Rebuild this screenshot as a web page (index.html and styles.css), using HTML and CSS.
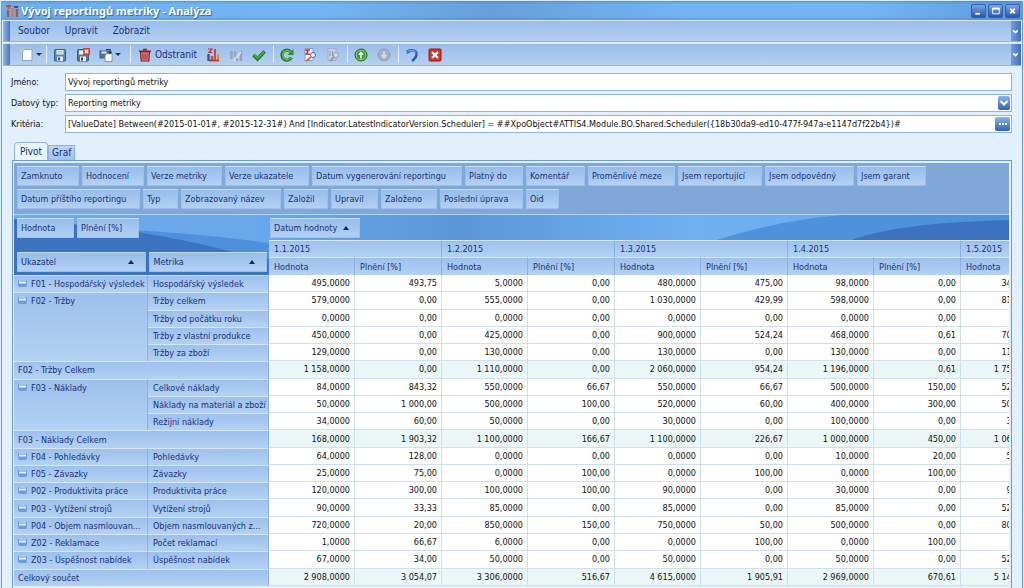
FILE: index.html
```
<!DOCTYPE html>
<html lang="cs">
<head>
<meta charset="utf-8">
<title>Vývoj reportingů metriky - Analýza</title>
<link rel="stylesheet" href="styles.css">
</head>
<body>
<div class="window">
  <header class="titlebar">
    <svg class="app-icon" viewBox="0 0 14 14" aria-hidden="true"><path d="M1 2h5M3.500 2v3" stroke="#d8432c" stroke-width="2"/><path d="M3 6v7M12 5v8" stroke="#b5543c" stroke-width="2.400"/><path d="M7.500 4v9" stroke="#e8772e" stroke-width="2.400"/><path d="M9 3h4" stroke="#6a3a78" stroke-width="2"/></svg>
    <h1 class="title">Vývoj reportingů metriky - Analýza</h1>
    <div class="window-buttons">
      <button class="wbtn" aria-label="Minimalizovat"><svg viewBox="0 0 13 13"><path d="M3 9.500h5" stroke="#fff" stroke-width="2"/></svg></button>
      <button class="wbtn" aria-label="Maximalizovat"><svg viewBox="0 0 13 13"><path d="M3.500 3.500h7v6h-7z" fill="none" stroke="#fff"/><path d="M3 4h8" stroke="#fff" stroke-width="2"/></svg></button>
      <button class="wbtn" aria-label="Zavřít"><svg viewBox="0 0 13 13"><path d="M4 4l5 5M9 4l-5 5" stroke="#fff" stroke-width="2"/></svg></button>
    </div>
  </header>

  <nav class="bar menubar">
    <span class="grip"></span>
    <button class="menu-item">Soubor</button>
    <button class="menu-item">Upravit</button>
    <button class="menu-item">Zobrazit</button>
    <button class="overflow" aria-label="Další"><svg viewBox="0 0 8 8"><path d="M2 3l2 2 2-2" fill="none" stroke="#fff" stroke-width="1.300"/></svg></button>
  </nav>

  <div class="bar toolbar">
    <span class="grip"></span>
    <button class="tool drop" aria-label="Nový"><svg viewBox="0 0 14 14"><path d="M4 1.500h8v11H2.500V4z" fill="#fdfefe" stroke="#8ba7cc"/><path d="M1 4l3-3v3z" fill="#f2c84a"/></svg><i class="caret"></i></button>
    <span class="sep"></span>
    <button class="tool" aria-label="Uložit"><svg viewBox="0 0 14 14"><rect x="1.500" y="1.500" width="11" height="11.500" rx="1" fill="#5d83b4" stroke="#365a8c"/><rect x="3.500" y="2" width="7" height="4.500" fill="#f4f8fc"/><path d="M4.500 3.500h5M4.500 5h5" stroke="#7fa57c" stroke-width=".7"/><rect x="4" y="8.500" width="6" height="4.500" fill="#e5edf6"/><rect x="5" y="9.500" width="2" height="3" fill="#34537f"/></svg></button>
    <button class="tool" aria-label="Uložit a zavřít"><svg viewBox="0 0 14 14"><rect x="1.500" y="1.500" width="11" height="11.500" rx="1" fill="#5d7396" stroke="#365a8c"/><rect x="3" y="2.500" width="6" height="4" fill="#f4f8fc"/><rect x="4" y="8.500" width="6" height="4.500" fill="#e5edf6"/><rect x="5" y="9.500" width="2" height="3" fill="#344"/><rect x="7" y="0" width="7" height="7" fill="#d8412f"/><path d="M8.800 1.800l3.400 3.400M12.200 1.800L8.800 5.200" stroke="#fff" stroke-width="1.400"/></svg></button>
    <button class="tool drop" aria-label="Uložit a nový"><svg viewBox="0 0 14 14"><rect x="1" y="3" width="8" height="7" fill="#58739b" stroke="#2e4569" stroke-width=".8"/><rect x="2.500" y="3.500" width="5" height="2" fill="#eef"/><path d="M7.500 5.500h5.500v8H6V8z" fill="#f9fbfd" stroke="#6b83a8" stroke-width=".8"/><path d="M7 1.500h4v3M9.500 3.500L11 5.500l1.500-2" fill="none" stroke="#1f2f4f" stroke-width="1.200"/></svg><i class="caret"></i></button>
    <span class="sep"></span>
    <button class="tool labelled"><svg viewBox="0 0 14 14"><path d="M2.500 4h9l-.7 9H3.200z" fill="#e08a86" stroke="#8e1f24" stroke-width="1.200"/><path d="M1 3.200h12M5 1.500h4" stroke="#8e1f24" stroke-width="1.600"/><path d="M5 5.500v6M7 5.500v6M9 5.500v6" stroke="#8e1f24" stroke-width=".9"/></svg>Odstranit</button>
    <button class="tool" aria-label="Analýza"><svg viewBox="0 0 14 14"><path d="M2 1h4L3 4.500h3.500" fill="none" stroke="#cf2e2e" stroke-width="1.200"/><path d="M2.500 6v7" stroke="#31599c" stroke-width="2.400"/><path d="M6 8v5" stroke="#d2483a" stroke-width="2.400"/><path d="M9 1v12" stroke="#9f3b46" stroke-width="1.600"/><path d="M12 6v7" stroke="#e68a34" stroke-width="2.200"/><path d="M3 12.500h10" stroke="#c8342b" stroke-width="1.800"/></svg></button>
    <button class="tool" disabled aria-label="Graf"><svg viewBox="0 0 14 14"><path d="M2.500 3v8M6 3v6M12 3v10" stroke="#93a2b8" stroke-width="2.300"/><path d="M5 13l7-9" stroke="#dfe7f0" stroke-width="1.500"/><path d="M8 13v-3" stroke="#93a2b8" stroke-width="2"/></svg></button>
    <button class="tool" aria-label="Potvrdit"><svg viewBox="0 0 14 14"><path d="M1.500 7l4 4L12.500 3.500" fill="none" stroke="#1f6d1c" stroke-width="3.600"/><path d="M2 7l3.500 3.300L12 3.800" fill="none" stroke="#45ad34" stroke-width="2"/></svg></button>
    <span class="sep"></span>
    <button class="tool" aria-label="Obnovit"><svg viewBox="0 0 14 14"><path d="M11.300 9.500A5 5 0 1 1 10.500 3.600" fill="none" stroke="#217a1f" stroke-width="3.200"/><path d="M11 9.500A4.600 4.600 0 1 1 10.500 4" fill="none" stroke="#5fbd4b" stroke-width="1.400"/><path d="M13.500 1v6H7.500z" fill="#2f8f2a"/></svg></button>
    <button class="tool" aria-label="Součty"><svg viewBox="0 0 14 14"><path d="M2 .5h8v12H2z" fill="#f7f9fd" stroke="#6f8fc4" stroke-width=".8"/><path d="M7 2H3l2 2-2 2.200h4" fill="none" stroke="#cc2430" stroke-width="1.300"/><circle cx="10" cy="7" r="2.500" fill="#e6f1fb" stroke="#4a6ea8"/><path d="M8 9l-5 4.500" stroke="#d06d42" stroke-width="1.800"/></svg></button>
    <button class="tool" disabled aria-label="Filtr"><svg viewBox="0 0 14 14"><path d="M2 .5h8v12H2z" fill="#c3d0e0" stroke="#9caac0" stroke-width=".8"/><path d="M4 3v5M6.500 3v5" stroke="#92a0b6"/><circle cx="10" cy="7" r="2.500" fill="#d2deea" stroke="#8e9cb2"/><path d="M8 9l-4 4" stroke="#8e9cb2" stroke-width="1.800"/></svg></button>
    <span class="sep"></span>
    <button class="tool" aria-label="Předchozí"><svg viewBox="0 0 14 14"><circle cx="7" cy="7" r="6" fill="#3d9c2e" stroke="#23641d"/><circle cx="7" cy="7" r="4.800" fill="none" stroke="#b9e2a8" stroke-width=".7"/><path d="M7 10.500V5M4.800 6.800L7 4.600l2.200 2.200" fill="none" stroke="#fff" stroke-width="1.500"/></svg></button>
    <button class="tool" disabled aria-label="Další záznam"><svg viewBox="0 0 14 14"><circle cx="7" cy="7" r="6" fill="#a3b1c3" stroke="#8f9db1"/><path d="M7 3.500V9M4.500 7L7 9.700 9.500 7" fill="none" stroke="#dbe5f0" stroke-width="1.500"/></svg></button>
    <span class="sep"></span>
    <button class="tool" aria-label="Zpět"><svg viewBox="0 0 14 14"><path d="M2 3.500c4-2 9-1.500 9.500 2 .3 3-2 5.500-4.500 7.500" fill="none" stroke="#2c5cae" stroke-width="2.400"/><path d="M2 3.500c4-2 8.500-1.500 9 2" fill="none" stroke="#86b4ec" stroke-width="1"/><path d="M1 2l1 4.500 4-2.500z" fill="#4d82cc"/></svg></button>
    <button class="tool" aria-label="Zavřít"><svg viewBox="0 0 14 14"><rect x="1" y="1" width="12" height="12" rx="1" fill="#cf3528" stroke="#9a1a15"/><path d="M4 4l6 6M10 4l-6 6" stroke="#fff" stroke-width="2.200"/></svg></button>
    <button class="overflow" aria-label="Další"><svg viewBox="0 0 8 8"><path d="M2 3l2 2 2-2" fill="none" stroke="#fff" stroke-width="1.300"/></svg></button>
  </div>

  <main class="content">
    <form class="fields">
      <label for="name">Jméno:</label>
      <div class="field"><input id="name" type="text" value="Vývoj reportingů metriky"></div>
      <label for="type">Datový typ:</label>
      <div class="field"><select id="type"><option>Reporting metriky</option></select><span class="fbtn arrow"><svg viewBox="0 0 12 12"><path d="M2.500 4L6 7.500 9.500 4" fill="none" stroke="#fff" stroke-width="2"/></svg></span></div>
      <label for="crit">Kritéria:</label>
      <div class="field"><input id="crit" type="text" value="[ValueDate] Between(#2015-01-01#, #2015-12-31#) And [Indicator.LatestIndicatorVersion.Scheduler] = ##XpoObject#ATTIS4.Module.BO.Shared.Scheduler({18b30da9-ed10-477f-947a-e1147d7f22b4})#"><button type="button" class="fbtn more" aria-label="Upravit kritéria"><svg viewBox="0 0 12 12"><path d="M2 6h2M5 6h2M8 6h2" stroke="#fff" stroke-width="2"/></svg></button></div>
    </form>

    <div class="tabs" role="tablist">
      <button class="tab active" role="tab" aria-selected="true">Pivot</button>
      <button class="tab" role="tab" aria-selected="false">Graf</button>
    </div>

    <section class="pivot">
      <div class="filters">
        <div class="filter-row first">
          <button class="chip">Zamknuto</button><button class="chip">Hodnocení</button><button class="chip">Verze metriky</button><button class="chip">Verze ukazatele</button><button class="chip">Datum vygenerování reportingu</button><button class="chip">Platný do</button><button class="chip">Komentář</button><button class="chip">Proměnlivé meze</button><button class="chip">Jsem reportující</button><button class="chip">Jsem odpovědný</button><button class="chip">Jsem garant</button>
        </div>
        <div class="filter-row second">
          <button class="chip">Datum příštího reportingu</button><button class="chip">Typ</button><button class="chip">Zobrazovaný název</button><button class="chip">Založil</button><button class="chip">Upravil</button><button class="chip">Založeno</button><button class="chip">Poslední úprava</button><button class="chip">Oid</button>
        </div>
      </div>
      <div class="grid-wrap">
      <table class="grid">
        <colgroup><col class="c-ind"><col class="c-met"><col class="c-val"><col class="c-pct"><col class="c-val"><col class="c-pct"><col class="c-val"><col class="c-pct"><col class="c-val"><col class="c-pct"><col class="c-last"></colgroup>
        <thead>
          <tr class="area">
            <td class="corner" colspan="2" rowspan="3">
              <div class="chips data"><button class="chip">Hodnota</button><button class="chip">Plnění [%]</button></div>
              <div class="chips rows"><button class="chip sorted">Ukazatel<i class="up"></i></button><button class="chip sorted">Metrika<i class="up"></i></button></div>
            </td>
            <td class="column-area" colspan="9"><button class="chip date">Datum hodnoty<i class="up"></i></button></td>
          </tr>
          <tr class="dates"><th colspan="2">1.1.2015</th><th colspan="2">1.2.2015</th><th colspan="2">1.3.2015</th><th colspan="2">1.4.2015</th><th>1.5.2015</th></tr>
          <tr class="measures"><th>Hodnota</th><th>Plnění [%]</th><th>Hodnota</th><th>Plnění [%]</th><th>Hodnota</th><th>Plnění [%]</th><th>Hodnota</th><th>Plnění [%]</th><th>Hodnota</th></tr>
        </thead>
        <tbody>
          <tr><th class="group"><i class="node"></i>F01 - Hospodářský výsledek</th><th>Hospodářský výsledek</th><td>495,0000</td><td>493,75</td><td>5,0000</td><td>0,00</td><td>480,0000</td><td>475,00</td><td>98,0000</td><td>0,00</td><td>345,0000</td></tr>
          <tr><th class="group" rowspan="4"><i class="node"></i>F02 - Tržby</th><th>Tržby celkem</th><td>579,0000</td><td>0,00</td><td>555,0000</td><td>0,00</td><td>1 030,0000</td><td>429,99</td><td>598,0000</td><td>0,00</td><td>815,0000</td></tr>
          <tr><th>Tržby od počátku roku</th><td>0,0000</td><td>0,00</td><td>0,0000</td><td>0,00</td><td>0,0000</td><td>0,00</td><td>0,0000</td><td>0,00</td><td>0,0000</td></tr>
          <tr><th>Tržby z vlastní produkce</th><td>450,0000</td><td>0,00</td><td>425,0000</td><td>0,00</td><td>900,0000</td><td>524,24</td><td>468,0000</td><td>0,61</td><td>700,0000</td></tr>
          <tr><th>Tržby za zboží</th><td>129,0000</td><td>0,00</td><td>130,0000</td><td>0,00</td><td>130,0000</td><td>0,00</td><td>130,0000</td><td>0,00</td><td>115,0000</td></tr>
          <tr class="total"><th colspan="2">F02 - Tržby Celkem</th><td>1 158,0000</td><td>0,00</td><td>1 110,0000</td><td>0,00</td><td>2 060,0000</td><td>954,24</td><td>1 196,0000</td><td>0,61</td><td>1 755,0000</td></tr>
          <tr><th class="group" rowspan="3"><i class="node"></i>F03 - Náklady</th><th>Celkové náklady</th><td>84,0000</td><td>843,32</td><td>550,0000</td><td>66,67</td><td>550,0000</td><td>66,67</td><td>500,0000</td><td>150,00</td><td>525,0000</td></tr>
          <tr><th>Náklady na materiál a zboží</th><td>50,0000</td><td>1 000,00</td><td>500,0000</td><td>100,00</td><td>520,0000</td><td>60,00</td><td>400,0000</td><td>300,00</td><td>500,0000</td></tr>
          <tr><th>Režijní náklady</th><td>34,0000</td><td>60,00</td><td>50,0000</td><td>0,00</td><td>30,0000</td><td>0,00</td><td>100,0000</td><td>0,00</td><td>35,0000</td></tr>
          <tr class="total"><th colspan="2">F03 - Náklady Celkem</th><td>168,0000</td><td>1 903,32</td><td>1 100,0000</td><td>166,67</td><td>1 100,0000</td><td>226,67</td><td>1 000,0000</td><td>450,00</td><td>1 060,0000</td></tr>
          <tr><th class="group"><i class="node"></i>F04 - Pohledávky</th><th>Pohledávky</th><td>64,0000</td><td>128,00</td><td>0,0000</td><td>0,00</td><td>0,0000</td><td>0,00</td><td>10,0000</td><td>20,00</td><td>50,0000</td></tr>
          <tr><th class="group"><i class="node"></i>F05 - Závazky</th><th>Závazky</th><td>25,0000</td><td>75,00</td><td>0,0000</td><td>100,00</td><td>0,0000</td><td>100,00</td><td>0,0000</td><td>100,00</td><td>0,0000</td></tr>
          <tr><th class="group"><i class="node"></i>P02 - Produktivita práce</th><th>Produktivita práce</th><td>120,0000</td><td>300,00</td><td>100,0000</td><td>100,00</td><td>90,0000</td><td>0,00</td><td>30,0000</td><td>0,00</td><td>90,0000</td></tr>
          <tr><th class="group"><i class="node"></i>P03 - Vytížení strojů</th><th>Vytížení strojů</th><td>90,0000</td><td>33,33</td><td>85,0000</td><td>0,00</td><td>85,0000</td><td>0,00</td><td>85,0000</td><td>0,00</td><td>525,0000</td></tr>
          <tr><th class="group"><i class="node"></i>P04 - Objem nasmlouvan...</th><th>Objem nasmlouvaných z...</th><td>720,0000</td><td>20,00</td><td>850,0000</td><td>150,00</td><td>750,0000</td><td>50,00</td><td>500,0000</td><td>0,00</td><td>800,0000</td></tr>
          <tr><th class="group"><i class="node"></i>Z02 - Reklamace</th><th>Počet reklamací</th><td>1,0000</td><td>66,67</td><td>6,0000</td><td>0,00</td><td>0,0000</td><td>100,00</td><td>0,0000</td><td>100,00</td><td>0,0000</td></tr>
          <tr><th class="group"><i class="node"></i>Z03 - Úspěšnost nabídek</th><th>Úspěšnost nabídek</th><td>67,0000</td><td>34,00</td><td>50,0000</td><td>0,00</td><td>50,0000</td><td>0,00</td><td>50,0000</td><td>0,00</td><td>525,0000</td></tr>
          <tr class="total"><th colspan="2">Celkový součet</th><td>2 908,0000</td><td>3 054,07</td><td>3 306,0000</td><td>516,67</td><td>4 615,0000</td><td>1 905,91</td><td>2 969,0000</td><td>670,61</td><td>5 145,0000</td></tr>
        </tbody>
      </table>
      </div>
    </section>
  </main>
</div>
</body>
</html>
```
FILE: styles.css
```
* { box-sizing: border-box; }
body {
  margin: 0;
  font: 9px/12px "DejaVu Sans Condensed", "DejaVu Sans", sans-serif;
  color: #16307a;
  background: #e2effc;
}
button { font: inherit; color: inherit; border: 0; padding: 0; background: none; text-align: left; white-space: nowrap; }
svg { display: block; }

.window {
  display: flex;
  flex-direction: column;
  height: 100vh;
  overflow: hidden;
  border: 1px solid #d4ecfc;
  border-bottom: 0;
  background: #e2effc;
  box-shadow: inset 1px 0 #6b9bd6, inset -1px 0 #6b9bd6;
}

.titlebar {
  display: flex;
  align-items: center;
  height: 19px;
  padding: 0 2px 0 3px;
  margin: 0 1px;
  background:
    linear-gradient(rgba(60, 110, 160, .4), transparent 3px, transparent 15px, rgba(60, 110, 190, .3)),
    linear-gradient(90deg, #6aaeee, #74b6f4 30%, #679fda 48%, #72b4f4 67%, #74b6f4 84%, #5d9ade);
}
.app-icon { width: 14px; height: 14px; }
.title {
  flex: 1;
  margin: 0 0 0 2px;
  font: bold 11px/16px "Noto Sans", sans-serif;
  color: #fff;
  text-shadow: 1px 1px 1px #2f5f9f;
}
.window-buttons { display: flex; gap: 2px; }
.wbtn {
  width: 15px;
  height: 14px;
  border: 1px solid #2f5eac;
  border-radius: 2px;
  background: linear-gradient(#7ba7e4, #2a55a8);
}
.wbtn svg { width: 13px; height: 12px; }

.bar {
  display: flex;
  align-items: center;
  height: 22px;
  margin: 0 2px;
  border-top: 1px solid #d8eafc;
  border-bottom: 1px solid #8fb3e4;
  background: linear-gradient(#9bbdea, #b4d0f0);
  font-size: 10px;
}
.toolbar { margin-top: 1px; height: 23px; }
.grip {
  align-self: stretch;
  width: 7px;
  background: linear-gradient(90deg, #8fb6ec, #4677c2);
}
.overflow {
  align-self: stretch;
  display: flex;
  align-items: center;
  width: 10px;
  margin-left: auto;
  background: linear-gradient(90deg, #6f9ee0, #3f6fbe);
}
.overflow svg { width: 9px; height: 9px; }
.menu-item { margin-left: 8px; padding-right: 7px; }
.tool { flex: none; margin: 0 5px 0 4px; }
.tool svg { width: 14px; height: 14px; }
.drop, .labelled { display: flex; align-items: center; gap: 3px; }
.drop { gap: 2px; margin-right: 7px; }
.labelled { margin-left: 5px; }
.grip + .tool { margin-left: 10px; margin-right: 2px; }
.caret { border: 3px solid transparent; border-top-color: #16307a; border-bottom: 0; }
.sep { width: 1px; height: 17px; margin: 0 2px; background: #e4f0fc; }

.content {
  flex: 1;
  min-height: 0;
  display: flex;
  flex-direction: column;
  padding: 7px 11px 0 10px;
}
.fields {
  display: grid;
  grid-template-columns: 54px 1fr;
  row-gap: 3px;
  align-items: center;
  color: #111;
}
.field {
  display: flex;
  align-items: center;
  height: 18px;
  padding: 0 1px 0 2px;
  border: 1px solid #8fb3e4;
  background: #fff;
}
.field input, .field select {
  flex: 1;
  min-width: 0;
  padding: 0;
  border: 0;
  outline: 0;
  font: inherit;
  color: #111;
  background: none;
  appearance: none;
}
.fbtn {
  display: grid;
  place-items: center;
  width: 12px;
  height: 14px;
  border-radius: 2px;
  background: linear-gradient(#8db4ea, #2f62b4);
}
.fbtn.more { width: 15px; }
.fbtn svg { width: 12px; height: 12px; }

.tabs {
  display: flex;
  align-items: flex-end;
  height: 18px;
  margin: 9px 0 0 3px;
}
.tab {
  height: 15px;
  padding: 0 3px;
  border: 1px solid #8fb3e4;
  border-bottom: 0;
  background: linear-gradient(#bcd6f5, #9fc2ee);
  font-size: 10px;
}
.tab.active {
  height: 18px;
  padding: 0 5px;
  border-radius: 4px 4px 0 0;
  background: #eaf4fe;
}

.pivot {
  flex: 1;
  min-height: 0;
  display: flex;
  flex-direction: column;
  margin-left: 1px;
  padding: 2px 2px 2px 1px;
  border: 1px solid #6b9bd6;
  border-bottom: 0;
}
.filters {
  display: flex;
  flex-direction: column;
  gap: 3px;
  padding: 3px;
  padding-bottom: 5px;
  border-bottom: 1px solid #b4d2f4;
  background: #7fa8d8;
}
.filter-row { display: grid; column-gap: 3px; }
.first { grid-template-columns: 62px 62px 75px 84px 150px 58px 59px 87px 84px 89px 69px; }
.second { grid-template-columns: 123px 35px 100px 44px 47px 56px 83px 33px; }
.chip {
  height: 20px;
  padding: 0 3px;
  border: 1px solid #9cc0ee;
  border-top-color: #c6e0fb;
  background: linear-gradient(#98bdea, #b2d0f2);
}

.grid-wrap {
  flex: 1;
  min-height: 0;
  overflow: hidden;
  background:
    url("data:image/svg+xml,%3Csvg xmlns='http://www.w3.org/2000/svg' viewBox='0 0 996 60' preserveAspectRatio='none'%3E%3Cdefs%3E%3ClinearGradient id='a'%3E%3Cstop stop-color='%236cacea'/%3E%3Cstop offset='.25' stop-color='%2368a8ea'/%3E%3Cstop offset='.45' stop-color='%235b97d8'/%3E%3Cstop offset='.68' stop-color='%2370b0ee'/%3E%3Cstop offset='1' stop-color='%236aa8e8'/%3E%3C/linearGradient%3E%3C/defs%3E%3Cpath fill='url(%23a)' d='M0 0h996v60H0z'/%3E%3Cpath fill='%234f90dc' d='M0 12Q140 12 255 28v32H0z'/%3E%3Cpath fill='%233b72c2' d='M0 4Q130 13 215 36L255 44V60H0z'/%3E%3Cpath fill='%234f92dc' d='M700 26Q770 4 830 0h166v26z'/%3E%3Cpath fill='%233c72c0' d='M836 26Q880 8 996 5v21z'/%3E%3C/svg%3E") 0 0 / 100% 60px no-repeat;
}
.grid {
  width: 1031px;
  height: 100%;
  table-layout: fixed;
  border-collapse: separate;
  border-spacing: 0;
}
.c-ind { width: 134px; }
.c-met { width: 121px; }
.c-val { width: 86px; }
.c-pct { width: 87px; }
.c-last { width: 84px; }
.grid td, .grid th {
  padding: 0 4px;
  overflow: hidden;
  white-space: nowrap;
  font-weight: normal;
}
.grid th {
  padding: 0 0 0 5px;
  text-align: left;
  border-top: 1px solid #d2e6fc;
  border-right: 1px solid #8aafe0;
  background: linear-gradient(#9dc0ec, #b3d1f3);
}
.grid tbody td {
  text-align: right;
  color: #111;
  background: #fff;
  border-right: 1px solid #cfdff2;
  border-bottom: 1px solid #cfdff2;
}
.grid tbody tr.total td { background: #ebf6f6; }
.grid th.group, .grid .total th { padding-left: 4px; }
.grid tbody th[rowspan] { vertical-align: top; padding-top: 2px; }
.grid thead td { padding: 0; vertical-align: top; }
.area { height: 25px; }
.dates { height: 17px; }
.measures { height: 18px; }
.corner .chips { display: flex; gap: 3px; padding: 3px 2px 0 3px; }
.corner .rows { padding-top: 14px; }
.data .chip { width: 57px; }
.data .chip + .chip { width: 62px; }
.rows .chip { width: 130px; }
.rows .chip + .chip { width: 118px; }
.chip.sorted { display: flex; align-items: center; justify-content: space-between; padding-right: 11px; }
.grid thead .column-area { padding: 3px 1px 2px; }
.chip.date { display: flex; align-items: center; gap: 6px; width: 90px; padding: 0 3px; }
.up { border: 3px solid transparent; border-bottom: 4px solid #0c2466; border-top: 0; }
.node {
  display: inline-block;
  width: 9px;
  height: 8px;
  margin-right: 4px;
  border: 1px solid #6f9cd8;
  border-top-color: #a9c9f2;
  border-radius: 2px;
  background: linear-gradient(#9cc2f0 2px, #eaf4ff 2px, #eaf4ff 3px, #6b9ade 4px);
}
```
